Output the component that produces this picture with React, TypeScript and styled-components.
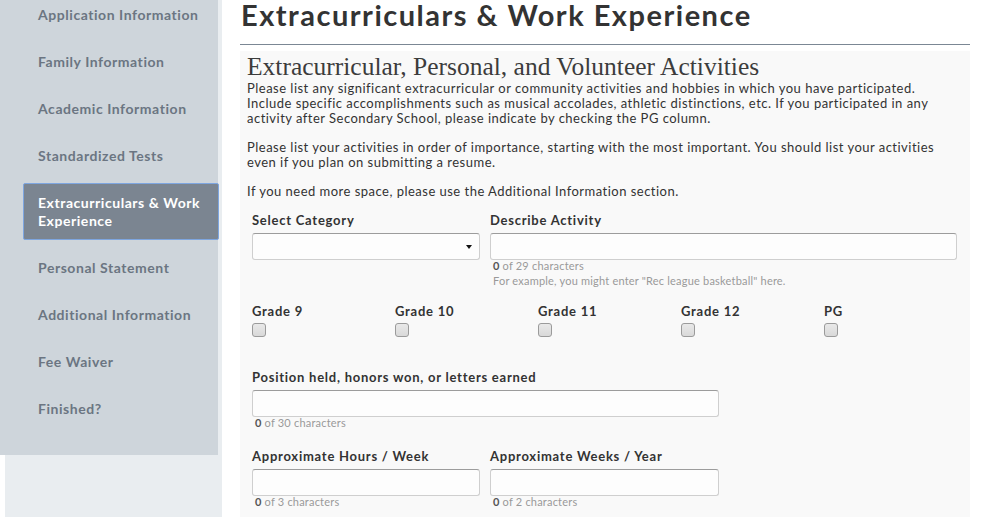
import React from "react";
import styled, { createGlobalStyle } from "styled-components";

const Global = createGlobalStyle`
  html, body { margin: 0; padding: 0; background: #ffffff; }
  body { font-family: Lato, "Open Sans", Arial, sans-serif; overflow: hidden; }
  * { box-sizing: border-box; }
`;

const Page = styled.div`
  display: flex;
  align-items: flex-start;
  width: 989px;
  height: 517px;
  overflow: hidden;
`;

const LeftCol = styled.aside`
  width: 222px;
  flex: none;
  align-self: stretch;
  padding-left: 2px;
  padding-right: 4px;
  background: linear-gradient(to right, #ffffff 0, #ffffff 5px, #e9edf0 5px);
`;

const Nav = styled.nav`
  background: #ced5db;
  margin-left: -3px;
  padding: 0 0 23px 3px;
  margin-top: -9px;
  display: flex;
  flex-direction: column;
  width: 219px;
`;

const NavItem = styled.div<{ $active?: boolean }>`
  margin: 4px 0 4px 21px;
  padding: 9.5px 10px 9.5px 14px;
  font-size: 14px;
  line-height: 18px;
  font-weight: 700;
  letter-spacing: 0.55px;
  color: ${(p) => (p.$active ? "#ffffff" : "#6b7582")};
  background: ${(p) => (p.$active ? "#7b8591" : "transparent")};
  border: 1px solid ${(p) => (p.$active ? "#7ea6e0" : "transparent")};
  border-radius: 2px;
  width: 196px;
`;

const Main = styled.main`
  flex: 1;
  min-width: 0;
  padding: 0 19px 0 18px;
`;

const Title = styled.h1`
  margin: 0;
  font-size: 29px;
  line-height: 29px;
  font-weight: 700;
  color: #333333;
  letter-spacing: 1.5px;
  padding: 0 0 15px 1px;
  border-bottom: 1px solid #7b8794;
`;

const Panel = styled.section`
  margin-top: 6px;
  background: #f9f9f9;
  padding: 0 0 40px 0;
`;

const Intro = styled.div`
  padding: 2px 10px 0 7px;
`;

const SerifHead = styled.h2`
  margin: 0;
  font-family: "Liberation Serif", "DejaVu Serif", serif;
  font-weight: 400;
  font-size: 25.5px;
  line-height: 28px;
  color: #3c3c3c;
`;

const Para = styled.p<{ $last?: boolean }>`
  margin: 0 0 ${(p) => (p.$last ? 0 : 14)}px 0;
  font-size: 13px;
  line-height: 15px;
  letter-spacing: 0.48px;
  color: #333333;
  font-weight: 400;
  white-space: nowrap;
`;

const Form = styled.div`
  padding: 0 12px;
  display: flex;
  flex-direction: column;
`;

const Row = styled.div<{ $mt?: number }>`
  display: flex;
  gap: 10px;
  margin-top: ${(p) => p.$mt ?? 0}px;
`;

const Field = styled.div<{ $w: number }>`
  width: ${(p) => p.$w}px;
  display: flex;
  flex-direction: column;
`;

const Label = styled.label`
  font-size: 13px;
  line-height: 18px;
  font-weight: 700;
  letter-spacing: 0.75px;
  color: #333333;
  margin-bottom: 4px;
  white-space: nowrap;
`;

const Input = styled.div`
  height: 27px;
  background: #fdfdfd;
  border: 1px solid #cfcfcf;
  border-top-color: #9c9c9c;
  border-radius: 3px;
  position: relative;
`;

const Arrow = styled.span`
  position: absolute;
  right: 7px;
  top: 11px;
  width: 0;
  height: 0;
  border-left: 3.5px solid transparent;
  border-right: 3.5px solid transparent;
  border-top: 4px solid #111;
`;

const Counter = styled.div`
  font-size: 11px;
  line-height: 12px;
  letter-spacing: 0.2px;
  color: #999999;
  padding-left: 3px;
  b { color: #555555; font-weight: 700; }
`;

const Hint = styled.div`
  font-size: 11px;
  line-height: 15px;
  letter-spacing: 0.2px;
  color: #999999;
  padding-left: 3px;
  margin-top: 1px;
  white-space: nowrap;
`;

const GradeRow = styled.div`
  display: grid;
  grid-template-columns: repeat(4, 143px) 1fr;
  margin-top: 14px;
`;

const GradeCol = styled.div`
  display: flex;
  flex-direction: column;
`;

const GradeLabel = styled.div`
  font-size: 13px;
  line-height: 18px;
  font-weight: 700;
  letter-spacing: 0.75px;
  color: #333333;
  margin-bottom: 3px;
`;

const Check = styled.span`
  display: block;
  width: 14px;
  height: 14px;
  border: 1px solid #9b9b9b;
  border-radius: 3px;
  background: linear-gradient(#e9e9e9, #d9d9d9);
`;

const navItems = [
  "Application Information",
  "Family Information",
  "Academic Information",
  "Standardized Tests",
  "Extracurriculars & Work Experience",
  "Personal Statement",
  "Additional Information",
  "Fee Waiver",
  "Finished?",
];

const grades = ["Grade 9", "Grade 10", "Grade 11", "Grade 12", "PG"];

export default function App() {
  return (
    <>
      <Global />
      <Page>
        <LeftCol>
          <Nav>
            {navItems.map((n, i) => (
              <NavItem key={n} $active={i === 4}>
                {n}
              </NavItem>
            ))}
          </Nav>
        </LeftCol>
        <Main>
          <Title>Extracurriculars &amp; Work Experience</Title>
          <Panel>
            <Intro>
              <SerifHead>Extracurricular, Personal, and Volunteer Activities</SerifHead>
              <Para>
                Please list any significant extracurricular or community activities and hobbies in which you have participated.
                <br />
                Include specific accomplishments such as musical accolades, athletic distinctions, etc. If you participated in any
                <br />
                activity after Secondary School, please indicate by checking the PG column.
              </Para>
              <Para>
                Please list your activities in order of importance, starting with the most important. You should list your activities
                <br />
                even if you plan on submitting a resume.
              </Para>
              <Para $last>If you need more space, please use the Additional Information section.</Para>
            </Intro>
            <Form>
              <Row $mt={12}>
                <Field $w={228}>
                  <Label>Select Category</Label>
                  <Input>
                    <Arrow />
                  </Input>
                </Field>
                <Field $w={467}>
                  <Label>Describe Activity</Label>
                  <Input />
                  <Counter>
                    <b>0</b> of 29 characters
                  </Counter>
                  <Hint>For example, you might enter "Rec league basketball" here.</Hint>
                </Field>
              </Row>
              <GradeRow>
                {grades.map((g) => (
                  <GradeCol key={g}>
                    <GradeLabel>{g}</GradeLabel>
                    <Check />
                  </GradeCol>
                ))}
              </GradeRow>
              <Row $mt={31}>
                <Field $w={467}>
                  <Label>Position held, honors won, or letters earned</Label>
                  <Input />
                  <Counter>
                    <b>0</b> of 30 characters
                  </Counter>
                </Field>
              </Row>
              <Row $mt={18}>
                <Field $w={228}>
                  <Label>Approximate Hours / Week</Label>
                  <Input />
                  <Counter>
                    <b>0</b> of 3 characters
                  </Counter>
                </Field>
                <Field $w={229}>
                  <Label>Approximate Weeks / Year</Label>
                  <Input />
                  <Counter>
                    <b>0</b> of 2 characters
                  </Counter>
                </Field>
              </Row>
            </Form>
          </Panel>
        </Main>
      </Page>
    </>
  );
}
